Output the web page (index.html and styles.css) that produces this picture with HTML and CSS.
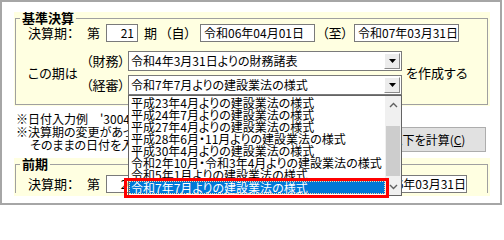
FILE: index.html
```html
<!DOCTYPE html>
<html lang="ja">
<head>
<meta charset="utf-8">
<title>決算期設定</title>
<link rel="stylesheet" href="styles.css">
</head>
<body>
<div class="frame">
  <div class="panel">
    <fieldset class="group">
      <legend>基準決算</legend>
      <div class="row">
        <span class="lbl w-kessan">決算期：</span>
        <span class="lbl w-dai">第</span>
        <span class="box num">21</span>
        <span class="lbl w-ki">期</span>
        <span class="lbl w-ji">（自）</span>
        <span class="box date-from">令和06年04月01日</span>
        <span class="lbl w-itaru">（至）</span>
        <span class="box date-to">令和07年03月31日</span>
      </div>
      <div class="period">
        <span class="lbl w-kono">この期は</span>
        <div class="combos">
          <div class="combo-row">
            <span class="lbl w-paren">（財務）</span>
            <div class="combo">
              <span class="combo-text">令和4年3月31日よりの財務諸表</span>
              <span class="combo-btn"><svg width="7" height="4" viewBox="0 0 7 4"><path d="M0 0H7L3.5 4Z" fill="#000"/></svg></span>
            </div>
          </div>
          <div class="combo-row">
            <span class="lbl w-paren">（経審）</span>
            <div class="combo">
              <span class="combo-text">令和7年7月よりの建設業法の様式</span>
              <span class="combo-btn"><svg width="7" height="4" viewBox="0 0 7 4"><path d="M0 0H7L3.5 4Z" fill="#000"/></svg></span>
              <div class="dropdown">
                <ul class="items">
                  <li>平成23年4月よりの建設業法の様式</li>
                  <li>平成24年7月よりの建設業法の様式</li>
                  <li>平成27年4月よりの建設業法の様式</li>
                  <li>平成28年6月・11月よりの建設業法の様式</li>
                  <li>平成30年4月よりの建設業法の様式</li>
                  <li>令和2年10月・令和3年4月よりの建設業法の様式</li>
                  <li>令和5年1月よりの建設業法の様式</li>
                  <li class="selected">令和7年7月よりの建設業法の様式</li>
                </ul>
                <div class="scrollbar">
                  <span class="sb-btn"><svg width="9" height="6" viewBox="0 0 9 6"><path d="M1 5L4.5 1.5L8 5" stroke="#606060" stroke-width="1.4" fill="none"/></svg></span>
                  <span class="sb-track"><span class="sb-thumb"></span></span>
                  <span class="sb-btn"><svg width="9" height="6" viewBox="0 0 9 6"><path d="M1 1L4.5 4.5L8 1" stroke="#606060" stroke-width="1.4" fill="none"/></svg></span>
                </div>
              </div>
            </div>
          </div>
        </div>
        <span class="lbl make">を作成する</span>
      </div>
    </fieldset>
  </div>

  <div class="notes-row">
    <div class="notes">
      <p>※日付入力例　'300401' → 平成30年04月01日</p>
      <p>※決算期の変更があった場合は、</p>
      <p class="indent">そのままの日付を入力して「以下を計算」を押して下さい。</p>
    </div>
    <button class="calc" type="button">以下を計算(<u>C</u>)</button>
  </div>

  <div class="panel panel-prev">
    <fieldset class="group open">
      <legend>前期</legend>
      <div class="row">
        <span class="lbl w-kessan">決算期：</span>
        <span class="lbl w-dai">第</span>
        <span class="box num">20</span>
        <span class="lbl w-ki">期</span>
        <span class="lbl w-ji">（自）</span>
        <span class="box date-from">令和05年04月01日</span>
        <span class="lbl w-itaru">（至）</span>
        <span class="box date-to">令和06年03月31日</span>
      </div>
    </fieldset>
  </div>
</div>
<div class="mark"></div>
</body>
</html>
```

FILE: styles.css
```css
* { box-sizing: border-box; }

html, body {
  margin: 0;
  padding: 0;
  background: #fff;
}

body {
  position: relative;
  width: 504px;
  height: 206px;
  overflow: hidden;
  font-family: "Noto Sans CJK JP", "Noto Sans", sans-serif;
  font-size: 12px;
  color: #000;
  font-feature-settings: "palt";
}

.frame {
  width: 502px;
  height: 205px;
  border: 2px solid #a6a6a6;
  padding-top: 10px;
}

.panel {
  width: 476px;
  margin-left: 12px;
  padding: 0 2px 1px 1px;
  background: #ffffe1;
}

.group {
  margin: 0;
  padding: 0 0 9px 0;
  min-width: 0;
  border: 1px solid #a0a0a0;
}

.group legend {
  margin-left: 4px;
  padding: 0 2px;
  font-size: 13px;
  font-weight: bold;
  line-height: 12px;
}

.row {
  display: flex;
  align-items: center;
  height: 18px;
  margin-left: 12px;
}

.lbl {
  flex: none;
  font-size: 13px;
  line-height: 18px;
  white-space: nowrap;
}

.w-kessan { width: 59px; }
.w-dai { width: 19px; }
.w-ki { width: 21px; margin-left: 6px; }
.w-ji { width: 35px; }
.w-itaru { width: 32px; margin-left: 7px; }

.box {
  flex: none;
  height: 18px;
  padding: 0 3px;
  border: 1px solid #7a7a7a;
  background: #fff;
  line-height: 16px;
  white-space: nowrap;
  overflow: hidden;
}

.box.num { width: 32px; text-align: right; }
.date-from { width: 115px; }
.date-to { width: 105px; }

.period {
  display: flex;
  align-items: center;
  margin: 9px 0 0 12px;
}

.w-kono { width: 58px; }

.combos {
  display: flex;
  flex-direction: column;
  gap: 4px;
}

.combo-row {
  display: flex;
  align-items: center;
}

.w-paren { width: 42px; }

.combo {
  position: relative;
  display: flex;
  align-items: center;
  width: 274px;
  height: 20px;
  border: 1px solid #7a7a7a;
  background: #fff;
}

.combo-text {
  flex: 1;
  padding-left: 2px;
  line-height: 18px;
  white-space: nowrap;
  overflow: hidden;
}

.combo-btn {
  display: flex;
  align-items: center;
  justify-content: center;
  width: 16px;
  height: 16px;
  margin-right: 1px;
  background: #ececec;
  border: 1px solid;
  border-color: #fff #8a8a8a #8a8a8a #fff;
}

.make { margin-left: 4px; }

.dropdown {
  position: absolute;
  left: -1px;
  top: calc(100% + 1px);
  z-index: 10;
  display: flex;
  width: 274px;
  height: 101px;
  border: 1px solid #646464;
  background: #fff;
}

.items {
  flex: 1;
  min-width: 0;
  margin: 0;
  padding: 1px 0 0;
  list-style: none;
  overflow: hidden;
}

.items li {
  height: 12px;
  padding-left: 2px;
  line-height: 12px;
  white-space: nowrap;
}

.items li.selected {
  height: 13px;
  line-height: 13px;
  background: #0078d7;
  color: #fff;
  outline: 1px dotted #ffd9a0;
  outline-offset: -1px;
}

.scrollbar {
  display: flex;
  flex: none;
  flex-direction: column;
  width: 16px;
  background: #f0f0f0;
}

.sb-btn {
  display: flex;
  align-items: center;
  justify-content: center;
  height: 17px;
}

.sb-track { flex: 1; }

.sb-thumb {
  display: block;
  height: 50px;
  margin: 13px 1px 0;
  background: #cdcdcd;
}

.notes-row {
  display: flex;
  justify-content: space-between;
  align-items: flex-start;
  height: 40px;
  margin-top: 6px;
}

.notes { margin-left: 14px; }

.notes p {
  margin: 0;
  line-height: 13px;
  white-space: nowrap;
}

.notes .indent { padding-left: 14px; }

.calc {
  width: 116px;
  height: 25px;
  margin: 15px 14px 0 0;
  padding: 0;
  border: 1px solid #adadad;
  background: #e1e1e1;
  color: #000;
  font: inherit;
  font-size: 12px;
}

.panel-prev {
  height: 38px;
  margin-top: 6px;
  padding-bottom: 0;
  overflow: hidden;
}

.group.open {
  border-bottom: none;
  padding-bottom: 0;
}

.panel-prev .row { margin-top: 5px; }
.panel-prev .date-from { width: 123px; }

.mark {
  position: absolute;
  left: 124px;
  top: 178px;
  z-index: 20;
  width: 265px;
  height: 20px;
  border: 3px solid #ff0000;
}
```
